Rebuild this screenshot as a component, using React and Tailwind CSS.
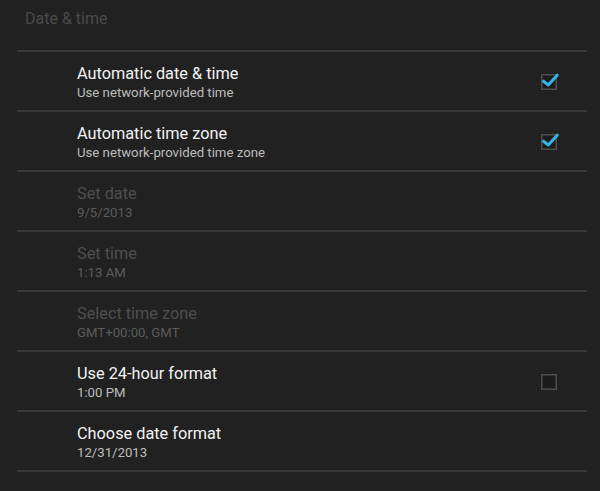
import React from "react";

const items = [
  { title: "Automatic date & time", sub: "Use network-provided time", check: true },
  { title: "Automatic time zone", sub: "Use network-provided time zone", check: true },
  { title: "Set date", sub: "9/5/2013", disabled: true },
  { title: "Set time", sub: "1:13 AM", disabled: true },
  { title: "Select time zone", sub: "GMT+00:00, GMT", disabled: true },
  { title: "Use 24-hour format", sub: "1:00 PM", check: false },
  { title: "Choose date format", sub: "12/31/2013" },
];

function Check({ checked }) {
  return (
    <svg width="22" height="22" viewBox="0 0 22 22" className="shrink-0">
      <rect x="3.75" y="4.75" width="14.5" height="14.5" fill="#1c1c1c" stroke="#4e4e4e" strokeWidth="1.5" />
      {checked && (
        <path d="M5.5 11.2 L10.3 15 L19.2 5.2" fill="none" stroke="#33b5e5" strokeWidth="3" strokeLinecap="round" strokeLinejoin="round" />
      )}
    </svg>
  );
}

export default function App() {
  return (
    <div className="w-[600px] h-[491px] bg-[#212121] overflow-hidden" style={{ fontFamily: "Roboto, 'Noto Sans', sans-serif" }}>
      <div className="h-[50px] pl-[25px] pt-[9px] text-[16px] leading-[20px] text-[#4a4a4a]">Date &amp; time</div>
      <div className="ml-[17px] mr-[13px]">
        {items.map((it) => (
          <div key={it.title} className="h-[60px] border-t-2 border-[#383838] flex items-center justify-between pl-[60px] pr-[27px]">
            <div className="self-start pt-[11px]">
              <div className={"text-[16.3px] leading-[21px] " + (it.disabled ? "text-[#4f4f4f]" : "text-[#f2f2f2]")}>{it.title}</div>
              <div className={"text-[13.2px] leading-[17px] " + (it.disabled ? "text-[#5c5c5c]" : "text-[#bdbdbd]")}>{it.sub}</div>
            </div>
            {it.check !== undefined && <Check checked={it.check} />}
          </div>
        ))}
        <div className="border-t-2 border-[#383838]" />
      </div>
    </div>
  );
}
